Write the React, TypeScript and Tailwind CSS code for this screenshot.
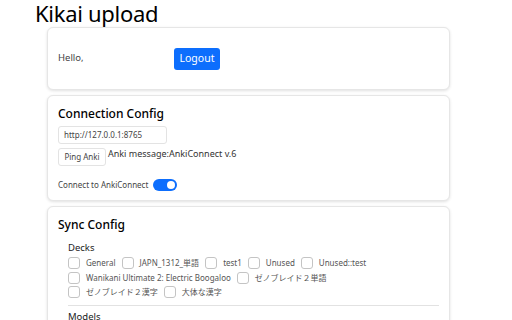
import React from 'react';

const decks: string[][] = [
  ['General', 'JAPN_1312_単語', 'test1', 'Unused', 'Unused::test'],
  ['Wanikani Ultimate 2: Electric Boogaloo', 'ゼノブレイド２単語'],
  ['ゼノブレイド２漢字', '大体な漢字'],
];

const Card: React.FC<{ className?: string; children: React.ReactNode }> = ({ className = '', children }) => (
  <div className={`rounded-[6px] border border-[#e6e6e6] bg-white shadow-[0_1px_3px_rgba(0,0,0,0.12)] ${className}`}>
    {children}
  </div>
);

const App: React.FC = () => {
  return (
    <div className="w-[512px] h-[320px] overflow-hidden bg-white text-[#212529] font-['Noto_Sans','Noto_Sans_CJK_JP',sans-serif]">
      <h1 className="pl-[35px] text-[22px] tracking-[-0.3px] leading-[24px] pt-[1px] h-[27px] text-black">Kikai upload</h1>

      <div className="ml-[47px] w-[403px] flex flex-col gap-[5px]">
        {/* Account */}
        <Card className="h-[63px] flex items-center px-[10px]">
          <span className="w-[116px] text-[9.5px] text-[#444]">Hello,</span>
          <button className="h-[22px] w-[46px] rounded-[3px] bg-[#0d6efd] text-white text-[10.5px]">Logout</button>
        </Card>

        {/* Connection */}
        <Card className="h-[106px] px-[10px] pt-[10px]">
          <h2 className="text-[12px] leading-[16px] font-medium text-black">Connection Config</h2>
          <div className="mt-[4px] h-[18px] w-[109px] rounded-[3px] border border-[#e3e3e3] flex items-center pl-[5px] text-[8px] text-[#444]">
            http://127.0.0.1:8765
          </div>
          <div className="mt-[4px] flex items-start">
            <button className="h-[18px] w-[48px] rounded-[3px] border border-[#e3e3e3] text-[8px] text-[#444]">Ping Anki</button>
            <span className="ml-[2px] mt-[-1px] text-[9px] leading-[14px] text-[#333]">Anki message:AnkiConnect v.6</span>
          </div>
          <div className="mt-[13px] flex items-center h-[12px]">
            <span className="text-[8px] text-[#444]">Connect to AnkiConnect</span>
            <div className="ml-[5px] h-[12px] w-[24px] rounded-full bg-[#0d6efd] flex items-center justify-end pr-[2px]">
              <div className="h-[8px] w-[8px] rounded-full bg-white" />
            </div>
          </div>
        </Card>

        {/* Sync */}
        <Card className="h-[140px] px-[10px] pt-[10px]">
          <h2 className="text-[12px] leading-[16px] font-medium text-black">Sync Config</h2>
          <div className="pl-[10px] mt-[8px]">
            <div className="text-[9.5px] leading-[14px] text-[#222]">Decks</div>
            <div className="mt-[1px] flex flex-col">
              {decks.map((row, i) => (
                <div key={i} className="flex items-center h-[14.5px]">
                  {row.map((d) => (
                    <label key={d} className="flex items-center mr-[6px]">
                      <span className="h-[12px] w-[12px] rounded-[3px] border border-[#c4c4c4] bg-white" />
                      <span className="ml-[6px] text-[8px] text-[#555] whitespace-nowrap">{d}</span>
                    </label>
                  ))}
                </div>
              ))}
            </div>
            <div className="mt-[5px] border-t border-[#e2e2e2]" />
            <div className="mt-[4px] text-[9.5px] leading-[14px] text-[#222]">Models</div>
          </div>
        </Card>
      </div>
    </div>
  );
};

export default App;
